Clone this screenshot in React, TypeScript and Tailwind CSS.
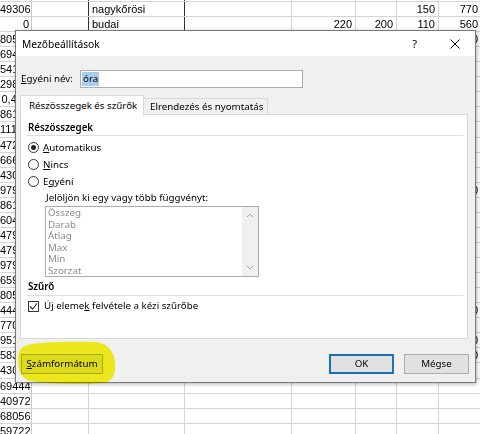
import React from "react";

const aClipped = [
  "80517", "69420", "54183", "29861", "0,417", "86125", "11172", "47236", "66619", "43011", "97902", "86148",
  "60437", "47905", "47911", "97922", "65938", "80519", "44427", "77086", "95163", "58349", "43071",
];

type Row = { a?: string; c?: string; e?: string; f?: string; g?: string; h?: string };

const rows: Row[] = (() => {
  const r: Row[] = [];
  r.push({ c: "pilisi" });
  r.push({ a: "49306", c: "nagykőrösi", g: "150", h: "770" });
  r.push({ a: "0", c: "budai", e: "220", f: "200", g: "110", h: "560" });
  aClipped.forEach((v) => r.push({ a: v }));
  ["69444", "40972", "68056", "59722"].forEach((v) => r.push({ a: v }));
  const hRows = [3, 13, 21, 23, 24];
  hRows.forEach((i) => {
    r[i] = { ...r[i], h: "390" };
  });
  return r;
})();

function Sheet() {
  return (
    <div className="mt-[-13.14px] font-['Liberation_Sans',Arial,sans-serif] text-[11px] leading-[14px] text-black">
      {rows.map((row, i) => {
        const dark = i <= 2;
        return (
          <div key={i} className="flex h-[15.07px] border-b border-[#d4d4d4]">
            <div className="w-[32px] shrink-0 border-r border-[#c8c8c8] pr-[2px] text-right">{row.a}</div>
            <div className={`w-[57px] shrink-0 border-r ${dark ? "border-[#333]" : "border-[#d4d4d4]"}`} />
            <div className={`w-[96px] shrink-0 border-r ${dark ? "border-[#333]" : "border-[#d4d4d4]"} pl-[3px]`}>{row.c}</div>
            <div className="w-[107px] shrink-0 border-r border-[#d4d4d4]" />
            <div className="w-[64px] shrink-0 border-r border-[#d4d4d4] pr-[3px] text-right">{row.e}</div>
            <div className="w-[41px] shrink-0 border-r border-[#d4d4d4] pr-[3px] text-right">{row.f}</div>
            <div className="w-[42px] shrink-0 border-r border-[#d4d4d4] pr-[3px] text-right">{row.g}</div>
            <div className="w-[42px] shrink-0 border-r border-[#d4d4d4] pr-[2px] text-right">{row.h}</div>
          </div>
        );
      })}
    </div>
  );
}

function Radio({ checked, children }: { checked?: boolean; children: React.ReactNode }) {
  return (
    <div className="flex h-[17px] items-center pl-[7px]">
      <div className="flex h-[11px] w-[11px] items-center justify-center rounded-full border border-[#333] bg-white">
        {checked && <div className="h-[5px] w-[5px] rounded-full bg-[#222]" />}
      </div>
      <span className="ml-[4px]">{children}</span>
    </div>
  );
}

function Chevron({ up }: { up?: boolean }) {
  return (
    <svg width="8" height="5" viewBox="0 0 8 5" className="block">
      <path d={up ? "M1 4 L4 1 L7 4" : "M1 1 L4 4 L7 1"} fill="none" stroke="#a6a6a6" strokeWidth="1" />
    </svg>
  );
}

function Dialog() {
  return (
    <div className="absolute left-[15px] top-[30px] flex h-[353px] w-[461px] flex-col border border-[#7a7a7a] bg-[#f0f0f0] font-['Noto_Sans',sans-serif] text-[9.75px] leading-[14px] text-black shadow-[1px_1px_4px_rgba(0,0,0,0.3)]">
      <div className="flex h-[25px] shrink-0 items-center bg-white pl-[6px] pr-[15px]">
        <span className="text-[10.25px]">Mezőbeállítások</span>
        <span className="ml-auto mr-[33px] text-[11px]">?</span>
        <svg width="10" height="10" viewBox="0 0 10 10" className="block">
          <path d="M0.5 0.5 L9.5 9.5 M9.5 0.5 L0.5 9.5" stroke="#000" strokeWidth="1" />
        </svg>
      </div>

      <div className="mt-[14px] flex h-[18px] shrink-0 items-center pl-[5px]">
        <span className="w-[59px]">
          <span className="underline underline-offset-[1px]">E</span>gyéni név:
        </span>
        <div className="flex h-[18px] w-[223px] items-center border border-[#acacac] bg-white pl-[1px]">
          <span className="flex h-[14px] items-center bg-[#a7cdef] px-[1px]">óra</span>
        </div>
      </div>

      <div className="mt-[7px] flex h-[20px] shrink-0 items-end pl-[4px]">
        <div className="relative z-10 flex h-[20px] w-[124px] items-center border border-b-0 border-[#d9d9d9] bg-white pl-[8px]">
          Részösszegek és szűrők
        </div>
        <div className="flex h-[17px] w-[124px] items-center border-r border-t border-[#d9d9d9] bg-[#f0f0f0] pl-[6px]">
          Elrendezés és nyomtatás
        </div>
      </div>

      <div className="ml-[4px] mt-[-1px] flex h-[225px] w-[448px] shrink-0 flex-col border border-[#d9d9d9] bg-white">
        <div className="ml-[7px] mt-[6px] flex h-[14px] items-center font-semibold">Részösszegek</div>
        <div className="ml-[6px] mr-[4px] h-px bg-[#dedede]" />
        <div className="mt-[3px]">
          <Radio checked>
            <span className="underline underline-offset-[1px]">A</span>utomatikus
          </Radio>
          <Radio>
            <span className="underline underline-offset-[1px]">N</span>incs
          </Radio>
          <Radio>
            E<span className="underline underline-offset-[1px]">g</span>yéni
          </Radio>
        </div>
        <div className="flex h-[15px] items-center pl-[25px]">Jelöljön ki egy vagy több függvényt:</div>
        <div className="ml-[24px] mt-[1px] flex h-[71px] w-[214px] border border-[#acacac] bg-white">
          <div className="flex-1 pl-[2px] leading-[11.5px] text-[#8d8d8d]">
            <div>Összeg</div>
            <div>Darab</div>
            <div>Átlag</div>
            <div>Max</div>
            <div>Min</div>
            <div>Szorzat</div>
          </div>
          <div className="flex w-[16px] flex-col items-center justify-between bg-[#f0f0f0] py-[6px]">
            <Chevron up />
            <Chevron />
          </div>
        </div>
        <div className="ml-[7px] mt-[3px] flex h-[14px] items-center font-semibold">Szűrő</div>
        <div className="ml-[6px] mr-[4px] mt-[1px] h-px bg-[#dedede]" />
        <div className="mt-[3px] flex h-[14px] items-center pl-[7px]">
          <div className="flex h-[11px] w-[11px] items-center justify-center border border-[#333] bg-white">
            <svg width="9" height="9" viewBox="0 0 9 9" className="block">
              <path d="M1 4.5 L3.5 7 L8 1.5" fill="none" stroke="#222" strokeWidth="1.1" />
            </svg>
          </div>
          <span className="ml-[5px]">
            Új eleme<span className="underline underline-offset-[1px]">k</span> felvétele a kézi szűrőbe
          </span>
        </div>
      </div>

      <div className="mt-[15px] flex h-[20px] shrink-0 items-center">
        <div className="ml-[5px] flex h-[20px] w-[82px] items-center justify-center border border-[#adadad] bg-[#e1e1e1]">
          <span>
            <span className="underline underline-offset-[1px]">S</span>zámformátum
          </span>
        </div>
        <div className="ml-auto flex h-[20px] w-[65px] items-center justify-center border-2 border-[#1f6fb5] bg-[#e1e1e1]">
          OK
        </div>
        <div className="ml-[10px] mr-[6px] flex h-[20px] w-[65px] items-center justify-center border border-[#adadad] bg-[#e1e1e1]">
          Mégse
        </div>
      </div>
    </div>
  );
}

export default function App() {
  return (
    <div className="relative h-[434px] w-[480px] overflow-hidden bg-white">
      <Sheet />
      <Dialog />
      <svg
        className="pointer-events-none absolute left-0 top-0 mix-blend-multiply"
        width="480"
        height="434"
        viewBox="0 0 480 434"
      >
        <path
          d="M22 348 C27 342 60 341 96 342 C108 343 114 352 115 362 C116 372 114 381 104 383 C80 385 45 384 31 381 C21 379 18 370 18 360 C18 354 19 351 22 348 Z"
          fill="#fbf61e"
        />
      </svg>
    </div>
  );
}
